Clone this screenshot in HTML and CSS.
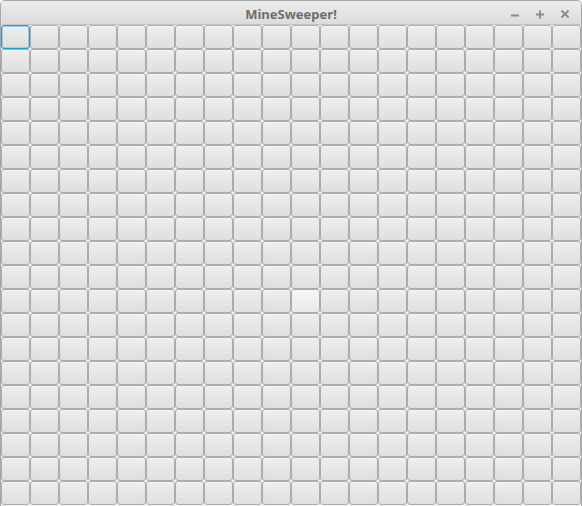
FILE: index.html
```html
<!DOCTYPE html>
<html>
<head>
<meta charset="utf-8">
<link rel="stylesheet" href="styles.css">
</head>
<body>
<div class="window">
  <div class="titlebar">
    <span class="title">MineSweeper!</span>
    <div class="controls">
      <svg class="ctl" width="12" height="12" viewBox="0 0 12 12"><path d="M2 7.5h8" stroke="#8c8c8c" stroke-width="2"/></svg>
      <svg class="ctl" width="12" height="12" viewBox="0 0 12 12"><path d="M2 6.5h8M6 2.5v8" stroke="#8c8c8c" stroke-width="2"/></svg>
      <svg class="ctl" width="12" height="12" viewBox="0 0 12 12"><path d="M2.5 2.5l7 7M9.5 2.5l-7 7" stroke="#8c8c8c" stroke-width="2"/></svg>
    </div>
  </div>
  <div class="grid" id="grid"></div>
</div>
<script>
  var g = document.getElementById('grid');
  for (var r = 0; r < 20; r++) {
    for (var c = 0; c < 20; c++) {
      var d = document.createElement('div');
      d.className = 'cell';
      if (r === 0 && c === 0) d.className += ' focused';
      if (r === 11 && c === 10) d.className += ' hover';
      g.appendChild(d);
    }
  }
</script>
</body>
</html>
```
FILE: styles.css
```css
html, body {
  margin: 0;
  padding: 0;
  background: #ffffff;
}
body {
  width: 582px;
  height: 506px;
  overflow: hidden;
}
.window {
  width: 582px;
  height: 506px;
  box-sizing: border-box;
  border-radius: 5px 5px 0 0;
  border: 1px solid #a8a8a8;
  border-bottom: none;
  background: #f2f2f2;
  overflow: hidden;
  display: flex;
  flex-direction: column;
}
.titlebar {
  height: 23px;
  flex: none;
  position: relative;
  display: flex;
  align-items: center;
  justify-content: center;
  background: linear-gradient(#ececec, #dcdcdc);
  border-bottom: 1px solid #c4c4c4;
}
.title {
  font-family: "Noto Sans", "Open Sans", sans-serif;
  font-weight: bold;
  font-size: 13px;
  color: #6e6e6e;
  padding-top: 3px;
}
.controls {
  position: absolute;
  right: 10px;
  top: 7px;
  display: flex;
  gap: 13px;
}
.ctl {
  display: block;
}
.grid {
  display: grid;
  grid-template-columns: repeat(20, 29px);
  grid-auto-rows: 24px;
  padding-left: 0;
  padding-top: 0;
}
.cell {
  box-sizing: border-box;
  border: 1px solid #acacac;
  border-radius: 3px;
  background: linear-gradient(#eeeeee, #dfdfdf);
  box-shadow: inset 0 1px 0 #f7f7f7;
}
.cell.focused {
  border: 1px solid #1a9ed8;
  box-shadow: inset 0 0 0 1px #8dd2ef;
}
.cell.hover {
  background: linear-gradient(#f6f6f6, #eaeaea);
}
```
